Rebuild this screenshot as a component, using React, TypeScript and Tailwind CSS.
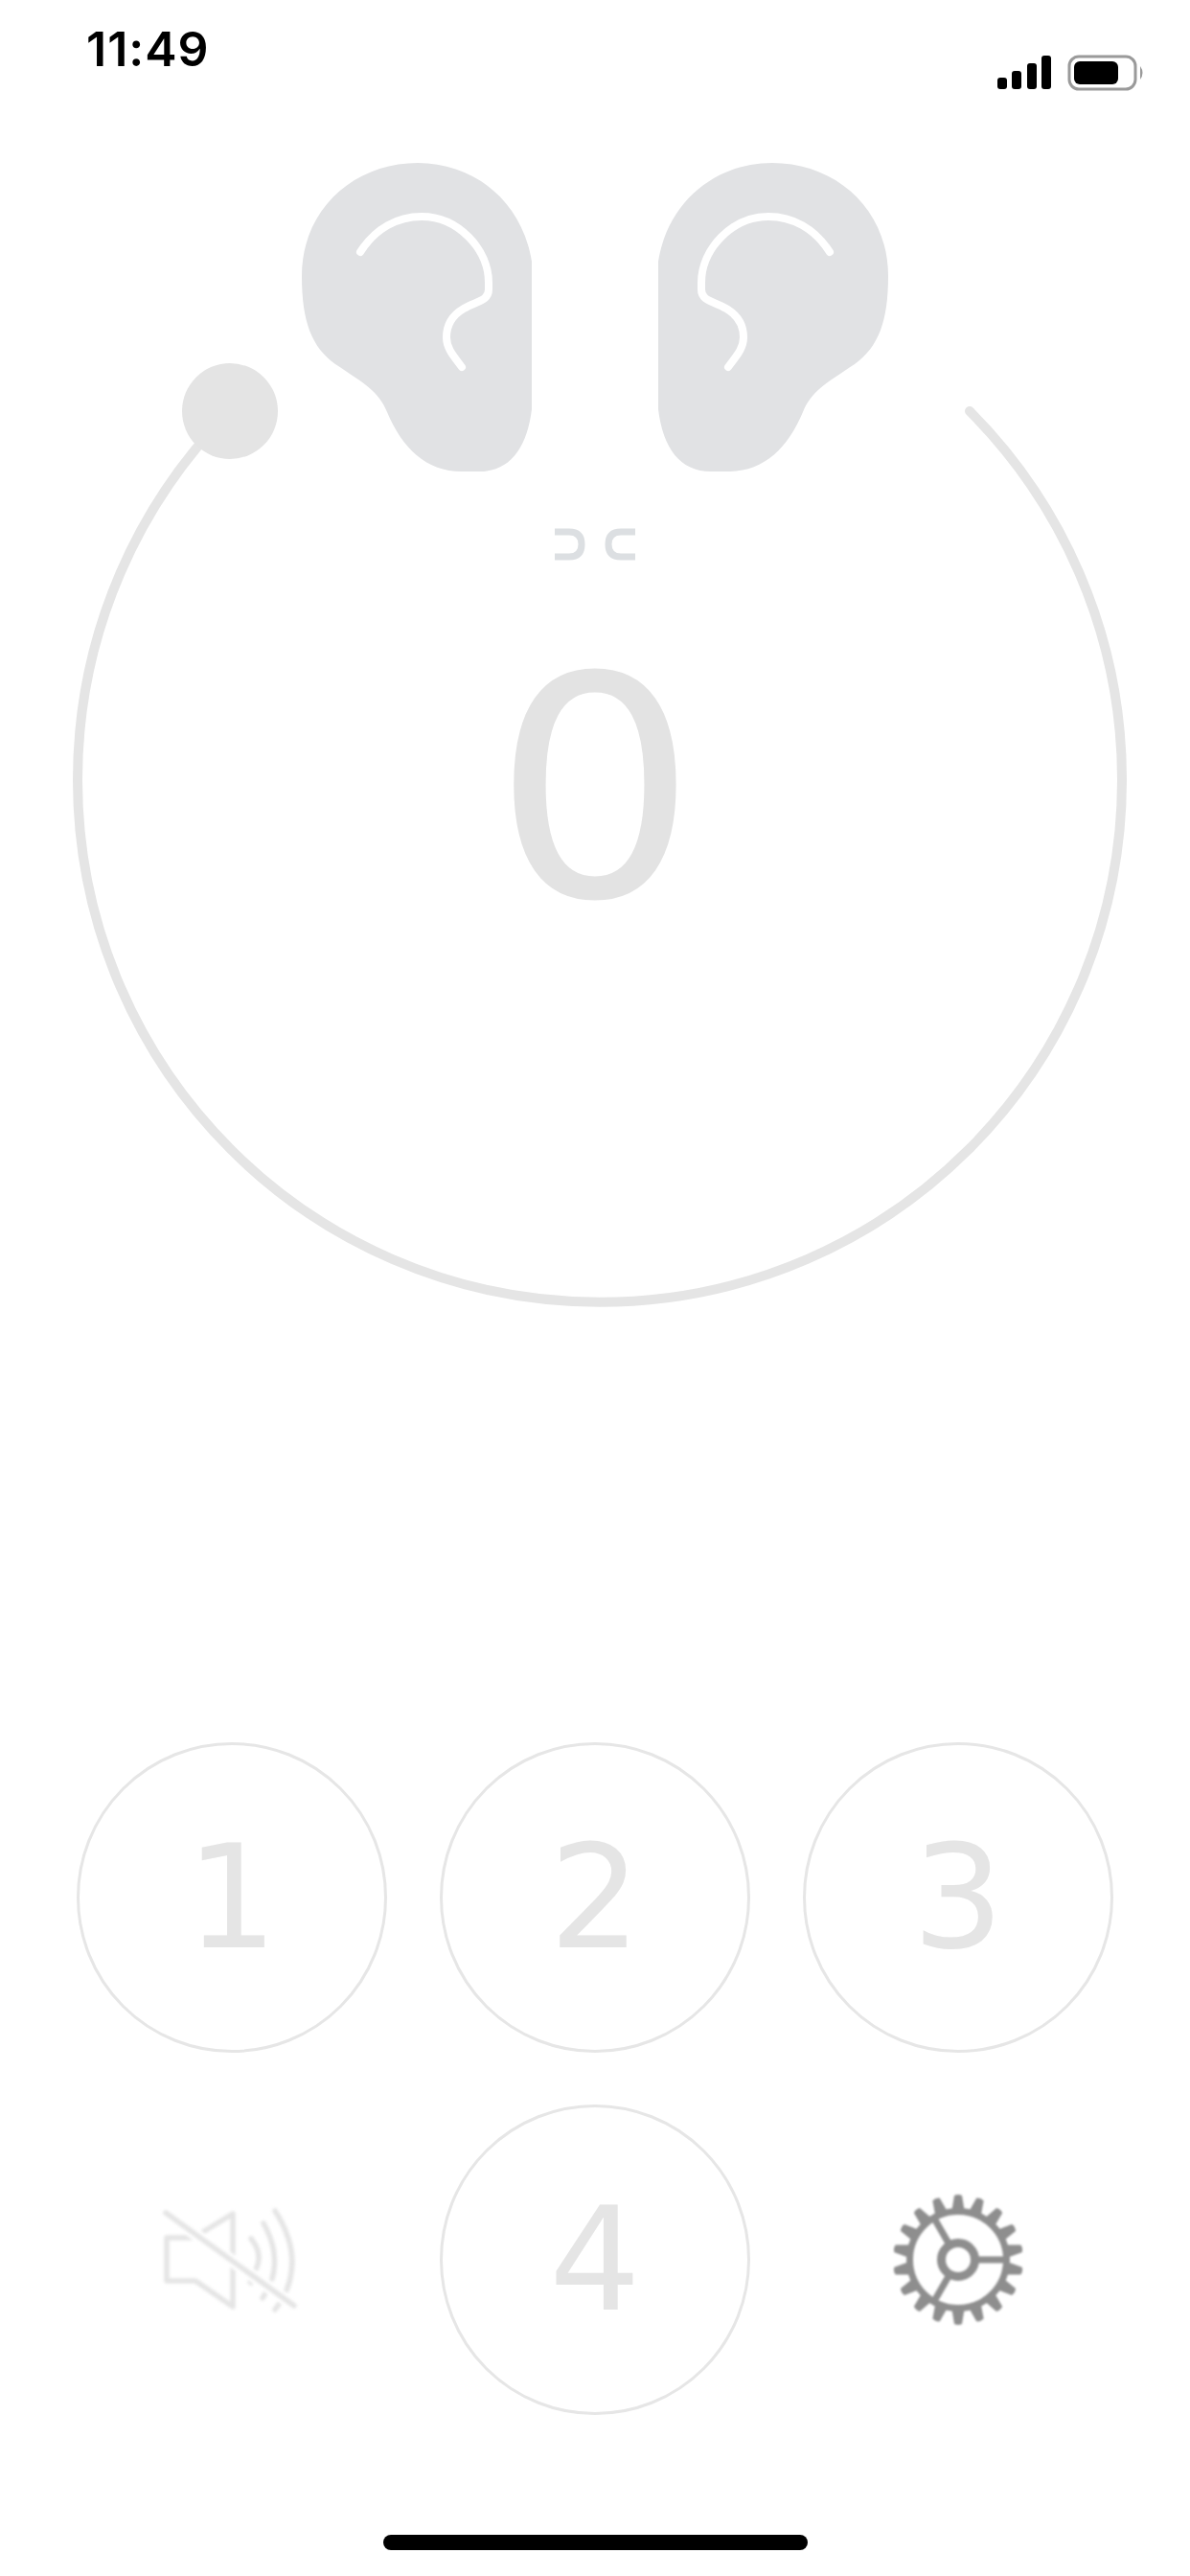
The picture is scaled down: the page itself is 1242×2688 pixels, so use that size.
const teeth = Array.from({ length: 18 }, (_, i) => 10 + i * 20);

function StatusIcons() {
  return (
    <svg width="160" height="40" viewBox="1040 56 160 40" className="mt-[56px]">
      <rect x="1041" y="81" width="10" height="12" rx="3" fill="#000" />
      <rect x="1056" y="74" width="10" height="19" rx="3" fill="#000" />
      <rect x="1072" y="66" width="10" height="27" rx="3" fill="#000" />
      <rect x="1087" y="58" width="10" height="35" rx="3" fill="#000" />
      <rect x="1116" y="59" width="69" height="34" rx="10" fill="none" stroke="#9a9a9a" strokeWidth="3" />
      <rect x="1121" y="64" width="46" height="24" rx="6" fill="#000" />
      <path d="M1190 69 Q1195 76 1190 83 Z" fill="#9a9a9a" />
    </svg>
  );
}

function Ear() {
  return (
    <>
      <path
        d="M436 170 C495 170 545 210 555 273 V427 C550 468 532 492 500 492 H482 C445 492 420 468 404 430 C395 408 380 400 350 380 C325 362 315 335 315 288 C315 218 370 170 436 170 Z"
        fill="#e1e2e4"
      />
      <path
        d="M376 263 C392 238 415 226 440 226 C478 226 510 260 510 295 V302 C510 314 498 314 484 322 C472 329 466 340 466 352 C466 364 474 372 482 383"
        fill="none"
        stroke="#fff"
        strokeWidth="8"
        strokeLinecap="round"
        strokeLinejoin="round"
      />
    </>
  );
}

function Gauge() {
  return (
    <svg width="1242" height="1380" viewBox="0 0 1242 1380" className="block">
      <path
        d="M240 429 A545 545 0 1 0 1012 429"
        fill="none"
        stroke="#e5e5e5"
        strokeWidth="10"
        strokeLinecap="round"
      />
      <circle cx="240" cy="429" r="50" fill="#e4e4e4" />
      <Ear />
      <g transform="translate(1242 0) scale(-1 1)">
        <Ear />
      </g>
      <path d="M579 555 H594 Q607 555 607 568 Q607 581 594 581 H579" fill="none" stroke="#dcdfe2" strokeWidth="7" />
      <path d="M663 555 H648 Q635 555 635 568 Q635 581 648 581 H663" fill="none" stroke="#dcdfe2" strokeWidth="7" />
    </svg>
  );
}

function NumberButton({ n }: { n: number }) {
  return (
    <div className="w-[324px] h-[324px] rounded-full border-[3px] border-[#e6e6e6] flex items-center justify-center">
      <span className="font-['DejaVu_Sans',sans-serif] text-[150px] leading-none text-[#e5e5e5]">{n}</span>
    </div>
  );
}

function MuteIcon() {
  return (
    <svg width="150" height="110" viewBox="168 2303 150 110" className="blur-[1.5px]">
      <g fill="none" stroke="#e5e5e5" strokeWidth="5.5" strokeLinecap="round" strokeLinejoin="round">
        <path d="M203 2335 H175 V2380 H205 L244 2407 V2310 Z" />
        <path d="M263 2336 Q276 2352 268 2368" />
        <path d="M276 2320 Q293 2350 285 2378" />
        <path d="M288 2307 Q316 2350 300 2390" />
        <path d="M275 2398 L278 2393" />
        <path d="M288 2410 L293 2403" />
        <path d="M262 2381 L263 2382" />
        <path d="M174 2309 L308 2406" stroke="#fff" strokeWidth="13" strokeLinecap="butt" />
        <path d="M174 2309 L308 2406" />
      </g>
    </svg>
  );
}

function GearIcon() {
  return (
    <svg width="140" height="140" viewBox="-70 -70 140 140" className="blur-[1px]">
      <g fill="#8e8e8e">
        {teeth.map(a => (
          <path key={a} d="M49 -7 L67 -4 Q69 0 67 4 L49 7 Z" transform={`rotate(${-a})`} />
        ))}
      </g>
      <g fill="none" stroke="#8e8e8e">
        <circle r="50.5" strokeWidth="7" />
        <circle r="17.5" strokeWidth="9" />
        <path d="M20 0 H48 M-10 17.3 L-24 41.6 M-10 -17.3 L-24 -41.6" strokeWidth="7" />
      </g>
    </svg>
  );
}

export default function App() {
  return (
    <div className="relative w-[1242px] h-[2688px] bg-white overflow-hidden font-['Inter',sans-serif]">
      <div className="flex justify-between items-start h-[100px] pl-[90px] pr-[42px]">
        <span className="mt-[22px] text-[50px] leading-[58px] font-semibold tracking-[1px] text-black">11:49</span>
        <StatusIcons />
      </div>
      <div className="relative -mt-[100px]">
        <Gauge />
        <span className="absolute left-0 right-0 top-[624px] text-center scale-x-[1.05] font-['DejaVu_Sans',sans-serif] text-[320px] leading-[400px] text-[#e3e3e3]">0</span>
      </div>
      <div className="mt-[438px] grid grid-cols-[324px_324px_324px] gap-x-[55px] gap-y-[54px] pl-[80px]">
        <NumberButton n={1} />
        <NumberButton n={2} />
        <NumberButton n={3} />
        <div className="flex items-center justify-center">
          <MuteIcon />
        </div>
        <NumberButton n={4} />
        <div className="flex items-center justify-center">
          <GearIcon />
        </div>
      </div>
      <div className="mt-[125px] mx-auto w-[443px] h-[16px] rounded-full bg-black" />
    </div>
  );
}
